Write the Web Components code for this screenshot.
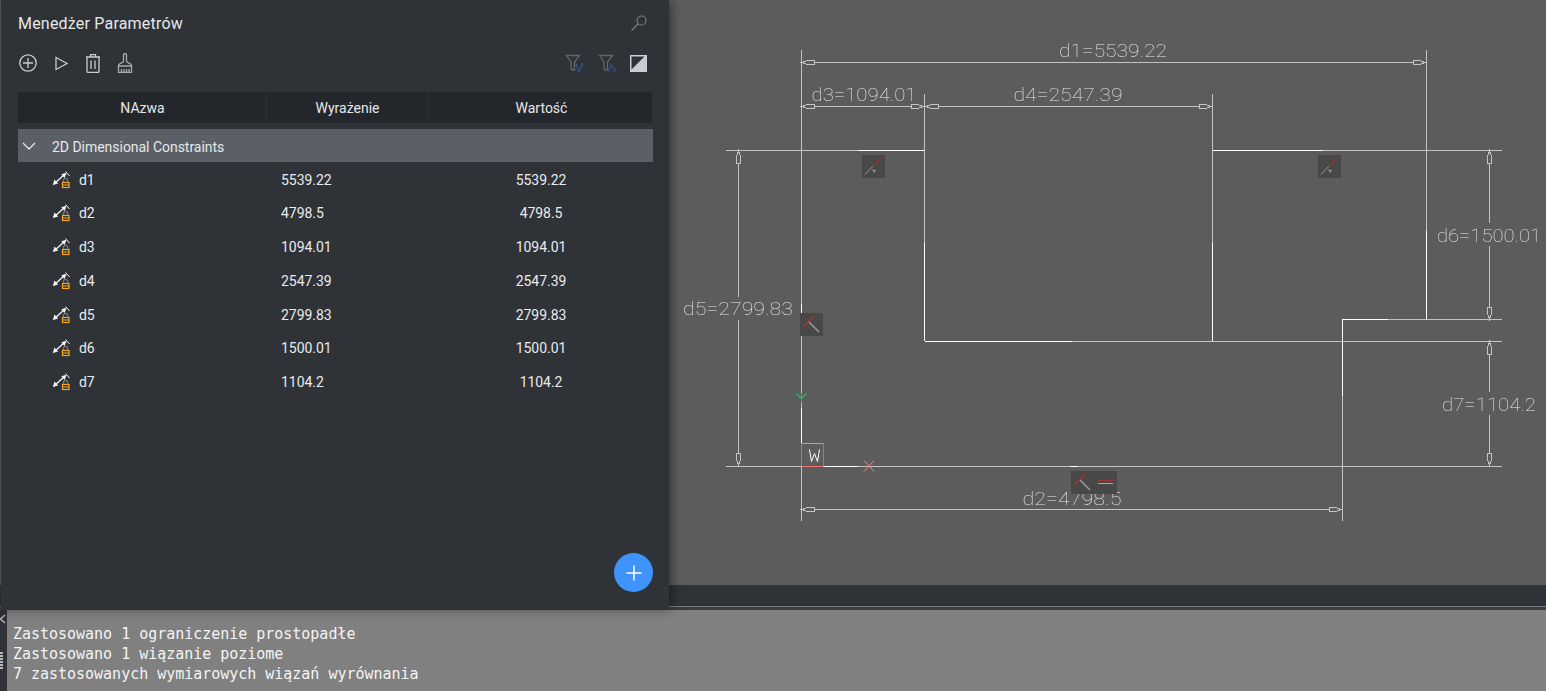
<!DOCTYPE html>
<html lang="pl">
<head>
<meta charset="utf-8">
<title>Menedżer Parametrów</title>
<style>
html, body { margin: 0; height: 100%; overflow: hidden; background: #2f3237; }
</style>
</head>
<body>
<cad-app>
	<cad-canvas slot="canvas"></cad-canvas>
	<param-panel slot="panel" heading="Menedżer Parametrów">
		<param-group label="2D Dimensional Constraints">
			<param-row name="d1" expr="5539.22" value="5539.22"></param-row>
			<param-row name="d2" expr="4798.5" value="4798.5"></param-row>
			<param-row name="d3" expr="1094.01" value="1094.01"></param-row>
			<param-row name="d4" expr="2547.39" value="2547.39"></param-row>
			<param-row name="d5" expr="2799.83" value="2799.83"></param-row>
			<param-row name="d6" expr="1500.01" value="1500.01"></param-row>
			<param-row name="d7" expr="1104.2" value="1104.2"></param-row>
		</param-group>
	</param-panel>
	<command-log slot="log">
		<div>Zastosowano 1 ograniczenie prostopadłe</div>
		<div>Zastosowano 1 wiązanie poziome</div>
		<div>7 zastosowanych wymiarowych wiązań wyrównania</div>
	</command-log>
</cad-app>

<script>
class CadApp extends HTMLElement {
	constructor() {
		super();
		this.attachShadow({ mode: 'open' }).innerHTML = `
<style>
:host { display: block; position: relative; width: 100%; height: 691px; overflow: hidden; }
.stack { display: flex; flex-direction: column; height: 100%; }
.strip { height: 25px; flex: none; box-sizing: border-box; background: #3a3d41; }
.strip div { height: 21px; background: #2f3237; border-bottom: 1px solid #77797c; }
.panel { position: absolute; left: 1px; top: 0; }
</style>
<div class="stack">
	<slot name="canvas"></slot>
	<div class="strip"><div></div></div>
	<slot name="log"></slot>
</div>
<div class="panel"><slot name="panel"></slot></div>
`;
	}
}
customElements.define('cad-app', CadApp);

// the drawing is a free canvas, so all of it sits at drawing coordinates
const grey = '#c3c3c3';
const white = '#ffffff';

function seg(x1, y1, x2, y2, color) {
	return `<line x1="${x1}" y1="${y1}" x2="${x2}" y2="${y2}" stroke="${color || grey}"/>`;
}

function arrow(x, y, dir) {
	const pts = {
		r: [[0, 0], [3, -1], [5, -2], [12, -2], [12, 2], [5, 2], [3, 1]],
		l: [[0, 0], [-3, -1], [-5, -2], [-12, -2], [-12, 2], [-5, 2], [-3, 1]],
		d: [[0, 0], [-1, -3], [-2, -5], [-2, -12], [2, -12], [2, -5], [1, -3]],
		u: [[0, 0], [-1, 3], [-2, 5], [-2, 12], [2, 12], [2, 5], [1, 3]]
	}[dir];
	const p = pts.map(q => `${x + q[0]},${y + q[1]}`).join(' ');
	return `<polygon points="${p}" fill="#5c5c5c" stroke="${grey}"/>`;
}

function marker(x, y, w) {
	return `<rect x="${x}" y="${y}" width="${w}" height="23" fill="#484848"/>`;
}

function slash(x, y) {
	return `<path class="aa" d="M${x + 3} ${y + 19.500}L${x + 11} ${y + 11}" stroke="#969696" fill="none"/>
<path class="aa" d="M${x + 11} ${y + 11}L${x + 18.500} ${y + 3.500}" stroke="#a8343a" fill="none"/>
<path class="aa" d="M${x + 10} ${y + 14}l4 1.500-2 2.500z" fill="#969696"/>`;
}

function tee(x, y) {
	return `<path class="aa" d="M${x + 3} ${y + 14}L${x + 14} ${y + 3}" stroke="#a8343a" stroke-width="1.500" fill="none"/>
<path class="aa" d="M${x + 9} ${y + 9}L${x + 19} ${y + 19}" stroke="#9a9a9a" stroke-width="1.500" fill="none"/>`;
}

const cadLabels = [
	['d1=5539.22', 1113, 57, 108],
	['d3=1094.01', 864, 101, 105],
	['d4=2547.39', 1068, 101, 109],
	['d5=2799.83', 738, 315, 110],
	['d6=1500.01', 1489, 241.500, 104],
	['d7=1104.2', 1489, 411, 94],
	['d2=4798.5', 1072, 505, 99]
];

class CadCanvas extends HTMLElement {
	constructor() {
		super();
		const lines = [
			seg(801.5, 50, 801.5, 393), seg(801.5, 403, 801.5, 408), seg(801.5, 466, 801.5, 521),
			seg(801.5, 62.5, 1426, 62.5), seg(1426.5, 50, 1426.5, 320),
			seg(801.5, 106.5, 924, 106.5), seg(925, 106.5, 1212, 106.5),
			seg(924.5, 94, 924.5, 341), seg(1212.5, 94, 1212.5, 341),
			seg(726, 150.5, 859, 150.5), seg(859, 150.5, 924, 150.5, white),
			seg(1213, 150.5, 1323, 150.5, white), seg(1323, 150.5, 1502, 150.5),
			seg(1489.5, 150, 1489.5, 223), seg(1489.5, 246, 1489.5, 320),
			seg(1388, 319.5, 1502, 319.5), seg(1342, 319.5, 1388, 319.5, white),
			seg(925, 341.5, 1072, 341.5, white), seg(1072, 341.5, 1502, 341.5),
			seg(1342.5, 320, 1342.5, 396, white), seg(1342.5, 396, 1342.5, 521),
			seg(1489.5, 341, 1489.5, 392), seg(1489.5, 415, 1489.5, 466),
			seg(726, 466.5, 1502, 466.5), seg(801, 509.5, 1342, 509.5),
			seg(738.5, 150, 738.5, 297), seg(738.5, 320, 738.5, 466),
			seg(1426.5, 231, 1426.5, 320, white), seg(924.5, 243, 924.5, 341, white),
			seg(1212.5, 243, 1212.5, 341, white),
			seg(801.5, 304, 801.5, 313, white), seg(1070, 466.5, 1078, 466.5, white)
		].join('');
		const arrows = [
			arrow(802, 62.5, 'r'), arrow(1425, 62.5, 'l'),
			arrow(802, 106.5, 'r'), arrow(923, 106.5, 'l'),
			arrow(926, 106.5, 'r'), arrow(1211, 106.5, 'l'),
			arrow(1489.5, 151, 'u'), arrow(1489.5, 319, 'd'),
			arrow(1489.5, 342, 'u'), arrow(1489.5, 465, 'd'),
			arrow(738.5, 151, 'u'), arrow(738.5, 465, 'd'),
			arrow(802, 509.5, 'r'), arrow(1341, 509.5, 'l')
		].join('');
		const labels = cadLabels.map(l =>
			`<text x="${l[1]}" y="${l[2]}" textLength="${l[3]}" lengthAdjust="spacingAndGlyphs">${l[0]}</text>`
		).join('');
		const markers = [
			marker(862, 155, 23), slash(862, 155),
			marker(1318, 155, 23), slash(1318, 155),
			marker(800, 313, 23), tee(800, 313),
			marker(1071, 471, 46), tee(1071, 471),
			seg(1098, 480.5, 1113, 480.5, '#a8343a'), seg(1098, 483.5, 1113, 483.5, '#a8a8a8')
		].join('');
		// UCS icon at the origin
		const ucs = [
			seg(801.5, 408, 801.5, 443, white),
			seg(801.5, 393, 801.5, 403, '#19c06e'),
			`<path class="aa" d="M796.5 393.5l5 5 5-5" fill="none" stroke="#19c06e" stroke-width="1.300"/>`,
			seg(802, 443.5, 823, 443.5, '#f08a8a'), seg(802, 466.5, 823, 466.5, '#f07070'),
			seg(801.5, 443, 801.5, 466, '#19c06e'), seg(823.5, 443, 823.5, 466, '#19c06e'),
			seg(824, 466.5, 858, 466.5, white),
			`<path class="aa" d="M864 460.5l10 11M874 460.5l-10 11" fill="none" stroke="#f08a8a"/>`,
			`<path class="aa" d="M809.5 449.5l2 12 3-8 3 8 2-12" fill="none" stroke="#fff"/>`
		].join('');
		this.attachShadow({ mode: 'open' }).innerHTML = `
<style>
:host { display: block; height: 585px; background: #5c5c5c; flex: none; }
svg { display: block; }
line, polygon { shape-rendering: crispEdges; }
.aa { shape-rendering: auto; }
.labels { filter: grayscale(1); }
text { font-family: Roboto, sans-serif; font-weight: 100; font-size: 19px; fill: #e4e4e4; text-anchor: middle; }
</style>
<svg width="1546" height="585" viewBox="0 0 1546 585">${lines}${arrows}<g class="labels">${labels}</g>${markers}${ucs}</svg>
`;
	}
}
customElements.define('cad-canvas', CadCanvas);

const toolIcons = {
	add: '<circle cx="10" cy="10" r="8.200"/><path d="M10 5v10M5 10h10"/>',
	run: '<path d="M5 4.500l11 6-11 6z"/>',
	trash: '<path d="M3 4h14M7.500 4V1.700h5V4M4 4v14a1.500 1.500 0 0 0 1.500 1.500h9A1.500 1.500 0 0 0 16 18V4M8 7.500v8.500M12 7.500v8.500"/>',
	brush: '<path transform="translate(-1 0)" stroke="#a9abb0" d="M8.500 8.500V2a1.500 1.500 0 0 1 3 0v6.500c0 1.500 5 1.500 5 4v7h-13v-7c0-2.500 5-2.500 5-4zM3.500 13h13M6.500 16v3.500M9 16v3.500M11.500 16v3.500M14 16v3.500"/>'
};

const funnel = '<path d="M1.500 2.500h13l-5 6.500v8h-2.500l-1-1.500v-6.500z" fill="none" stroke="#63666b" stroke-width="1.300"/>';

class ToolButton extends HTMLElement {
	constructor() {
		super();
		this.attachShadow({ mode: 'open' }).innerHTML = `
<style>
:host { display: block; width: 20px; height: 20px; }
svg { display: block; fill: none; stroke: #c9cbd0; stroke-width: 1.300; }
</style>
<svg width="20" height="20" viewBox="0 0 20 20">${toolIcons[this.getAttribute('icon')]}</svg>
`;
	}
}
customElements.define('tool-button', ToolButton);

class ParamPanel extends HTMLElement {
	constructor() {
		super();
		this.attachShadow({ mode: 'open' }).innerHTML = `
<style>
:host { display: block; position: relative; box-sizing: border-box; width: 668px; height: 609px; background: #2f3237; box-shadow: 2px 0 10px rgba(0,0,0,.45); padding: 0 15px 0 17px; font-family: Roboto, sans-serif; color: #e6e8ea; }
.title { display: flex; align-items: center; justify-content: space-between; height: 46px; }
h1 { margin: 0; font-size: 16px; font-weight: 400; letter-spacing: .2px; }
.title svg { margin-right: 6px; }
.tools { display: flex; align-items: center; justify-content: space-between; height: 20px; margin-top: 7px; }
.left, .right { display: flex; align-items: center; }
.left { gap: 12.500px; }
.right { margin-right: 7px; }
.right svg + svg { margin-left: 14px; }
.right svg:last-child { margin-left: 13px; }
.head { display: grid; grid-template-columns: 248px 162px 224px; width: 634px; height: 31px; margin-top: 19px; background: #23262a; font-size: 14px; }
.head div { display: flex; align-items: center; justify-content: center; border-left: 1px solid #2d3034; }
.head div:first-child { border-left: 0; padding-left: 1px; }
.head div:last-child { padding-left: 2px; }
.fab { position: absolute; left: 613px; top: 553px; width: 39px; height: 39px; border-radius: 50%; background: #3f94fb; display: flex; align-items: center; justify-content: center; }
</style>
<div class="title">
	<h1>${this.getAttribute('heading')}</h1>
	<svg width="18" height="18" viewBox="0 0 18 18" fill="none" stroke="#7b7e83" stroke-width="1.200"><circle cx="11.500" cy="6.500" r="4.500"/><path d="M8.300 9.800L1.500 16.500"/></svg>
</div>
<div class="tools">
	<div class="left">
		<tool-button icon="add"></tool-button>
		<tool-button icon="run"></tool-button>
		<tool-button icon="trash"></tool-button>
		<tool-button icon="brush"></tool-button>
	</div>
	<div class="right">
		<svg width="19" height="20" viewBox="0 0 19 20">${funnel}<path d="M11.500 12.500l2.500 6 3.500-7" fill="none" stroke="#2c4f80" stroke-width="1.600"/><circle cx="11.500" cy="11.500" r="1.300" fill="#2c4f80"/><circle cx="17" cy="11" r="1.300" fill="#2c4f80"/></svg>
		<svg width="19" height="20" viewBox="0 0 19 20">${funnel}<path d="M10.500 17.500l3-6 3 6" fill="none" stroke="#2c4f80" stroke-width="1.600"/><circle cx="10.500" cy="17.500" r="1.500" fill="#2c4f80"/><circle cx="17" cy="17.500" r="1.300" fill="#2c4f80"/></svg>
		<svg width="17" height="17" viewBox="0 0 17 17"><rect width="17" height="17" fill="#c9cdd6"/><path d="M1.500 1.500h13l-13 13z" fill="#2f3237"/></svg>
	</div>
</div>
<div class="head"><div>NAzwa</div><div>Wyrażenie</div><div>Wartość</div></div>
<slot></slot>
<div class="fab"><svg width="18" height="18" viewBox="0 0 18 18" stroke="#fff" stroke-width="1.500"><path d="M9 1.500v15M1.500 9h15"/></svg></div>
`;
	}
}
customElements.define('param-panel', ParamPanel);

class ParamGroup extends HTMLElement {
	constructor() {
		super();
		this.attachShadow({ mode: 'open' }).innerHTML = `
<style>
:host { display: block; margin-top: 6px; }
.bar { display: flex; align-items: center; height: 33px; width: 635px; background: #5b5f66; font-size: 14px; letter-spacing: -.03px; padding-top: 2px; box-sizing: border-box; }
svg { margin: 0 15px 0 3px; flex: none; }
</style>
<div class="bar">
	<svg width="16" height="14" viewBox="0 0 16 14" fill="none" stroke="#e6e8ea" stroke-width="1.300"><path d="M2 3l6 6 6-6"/></svg>
	<span>${this.getAttribute('label')}</span>
</div>
<div class="rows"><slot></slot></div>
`;
	}
}
customElements.define('param-group', ParamGroup);

class ParamRow extends HTMLElement {
	constructor() {
		super();
		this.attachShadow({ mode: 'open' }).innerHTML = `
<style>
:host { display: grid; grid-template-columns: 248px 163px 224px; align-items: center; height: 33.750px; padding-top: 1.500px; box-sizing: border-box; font-size: 14px; letter-spacing: -.05px; color: #e9ebee; }
.name { display: flex; align-items: center; gap: 8px; padding-left: 34px; }
.expr { padding-left: 15px; }
.val { text-align: center; }
svg { display: block; flex: none; }
</style>
<div class="name">
	<svg width="19" height="18" viewBox="0 0 19 18" fill="none">
		<path d="M2 13L13 3" stroke="#f4f4f4" stroke-width="1.300"/>
		<path d="M.8 14l1.700-5.500L6.200 12.500zM14.500 1.700l-5.200 1.500 3.300 3.700z" fill="#f4f4f4"/>
		<path d="M13.500 .5l4 4.500" stroke="#f4f4f4"/>
		<path d="M11.500 11V9.500a2.100 2.100 0 0 1 4.200 0V11" stroke="#74777c" stroke-width="1.200"/>
		<rect x="10.500" y="11.500" width="6.500" height="5" fill="#2f3237" stroke="#f5a623" stroke-width="1.200"/>
		<path d="M10.500 14h6.500" stroke="#f5a623"/>
	</svg>
	<span>${this.getAttribute('name')}</span>
</div>
<div class="expr">${this.getAttribute('expr')}</div>
<div class="val">${this.getAttribute('value')}</div>
`;
	}
}
customElements.define('param-row', ParamRow);

class CommandLog extends HTMLElement {
	constructor() {
		super();
		this.attachShadow({ mode: 'open' }).innerHTML = `
<style>
:host { display: flex; height: 81px; flex: none; background: #2f3237; }
.side { width: 7px; position: relative; flex: none; }
.x { position: absolute; left: 0; top: 4px; }
.grip { position: absolute; left: 0; top: 42px; }
.body { flex: 1; background: #808080; padding: 14px 0 0 6px; font: 15px/20px "DejaVu Sans Mono", monospace; letter-spacing: -.02px; color: #f4f4f4; white-space: nowrap; }
</style>
<div class="side">
	<svg class="x" width="7" height="10" viewBox="0 0 7 10" stroke="#a9acb2" stroke-width="1.600" fill="none"><path d="M5 1L.5 5 5 9"/></svg>
	<svg class="grip" width="3" height="18" viewBox="0 0 3 18" stroke="#e6e6e6" stroke-width="1.500"><path d="M0 1h3M0 4h3M0 7h3M0 10h3M0 13h3M0 16h3"/></svg>
</div>
<div class="body"><slot></slot></div>
`;
	}
}
customElements.define('command-log', CommandLog);
</script>
</body>
</html>
